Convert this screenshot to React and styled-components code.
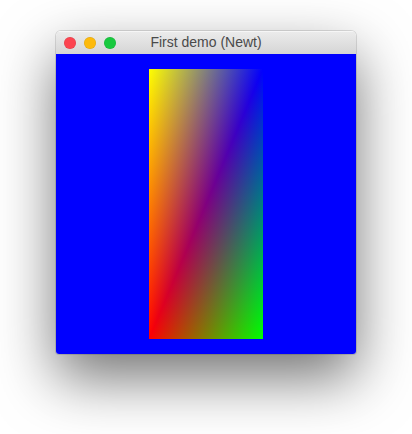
import React from 'react';
import styled, { createGlobalStyle } from 'styled-components';

const GlobalStyle = createGlobalStyle`
  html, body {
    margin: 0;
    padding: 0;
    background: #ffffff;
  }
  body {
    font-family: "Liberation Sans", Arial, sans-serif;
  }
`;

const Desktop = styled.div`
  width: 412px;
  height: 434px;
  padding: 31px 0 0 56px;
  box-sizing: border-box;
  overflow: hidden;
`;

const Window = styled.div`
  width: 300px;
  display: flex;
  flex-direction: column;
  border-radius: 5px 5px 3px 3px;
  overflow: hidden;
  box-shadow:
    0 0 0 1px rgba(0, 0, 0, 0.12),
    0 24px 58px rgba(0, 0, 0, 0.55);
`;

const TitleBar = styled.div`
  position: relative;
  height: 23px;
  display: flex;
  align-items: center;
  justify-content: center;
  background: linear-gradient(to bottom, #ececec, #d5d5d5);
  box-shadow: inset 0 1px 0 #f6f6f6;
`;

const Lights = styled.div`
  position: absolute;
  left: 8px;
  top: 6px;
  display: flex;
  gap: 8px;
`;

const Light = styled.span`
  width: 12px;
  height: 12px;
  border-radius: 50%;
  background: ${(props) => props.color};
  box-shadow: inset 0 0 0 0.5px rgba(0, 0, 0, 0.12);
`;

const Title = styled.span`
  font-size: 14px;
  color: #4a4a4a;
  line-height: 23px;
`;

const Canvas = styled.div`
  height: 300px;
  background: #0000ff;
  display: flex;
  align-items: center;
  justify-content: center;
`;

// quad drawn as two triangles: red-blue diagonal, per-channel gradients
const Quad = styled.div`
  width: 114px;
  height: 270px;
  background:
    linear-gradient(to bottom right, #00ff00, #000000 50%, #00ff00),
    linear-gradient(to right, #ff0000, #000000),
    linear-gradient(to right, #000000, #0000ff),
    linear-gradient(to bottom, #0000ff, #000000);
  background-blend-mode: screen, screen, darken, normal;
`;

export default function App() {
  return (
    <>
      <GlobalStyle />
      <Desktop>
        <Window>
          <TitleBar>
            <Lights>
              <Light color="#fc4450" />
              <Light color="#fdba0c" />
              <Light color="#18c93f" />
            </Lights>
            <Title>First demo (Newt)</Title>
          </TitleBar>
          <Canvas>
            <Quad />
          </Canvas>
        </Window>
      </Desktop>
    </>
  );
}
